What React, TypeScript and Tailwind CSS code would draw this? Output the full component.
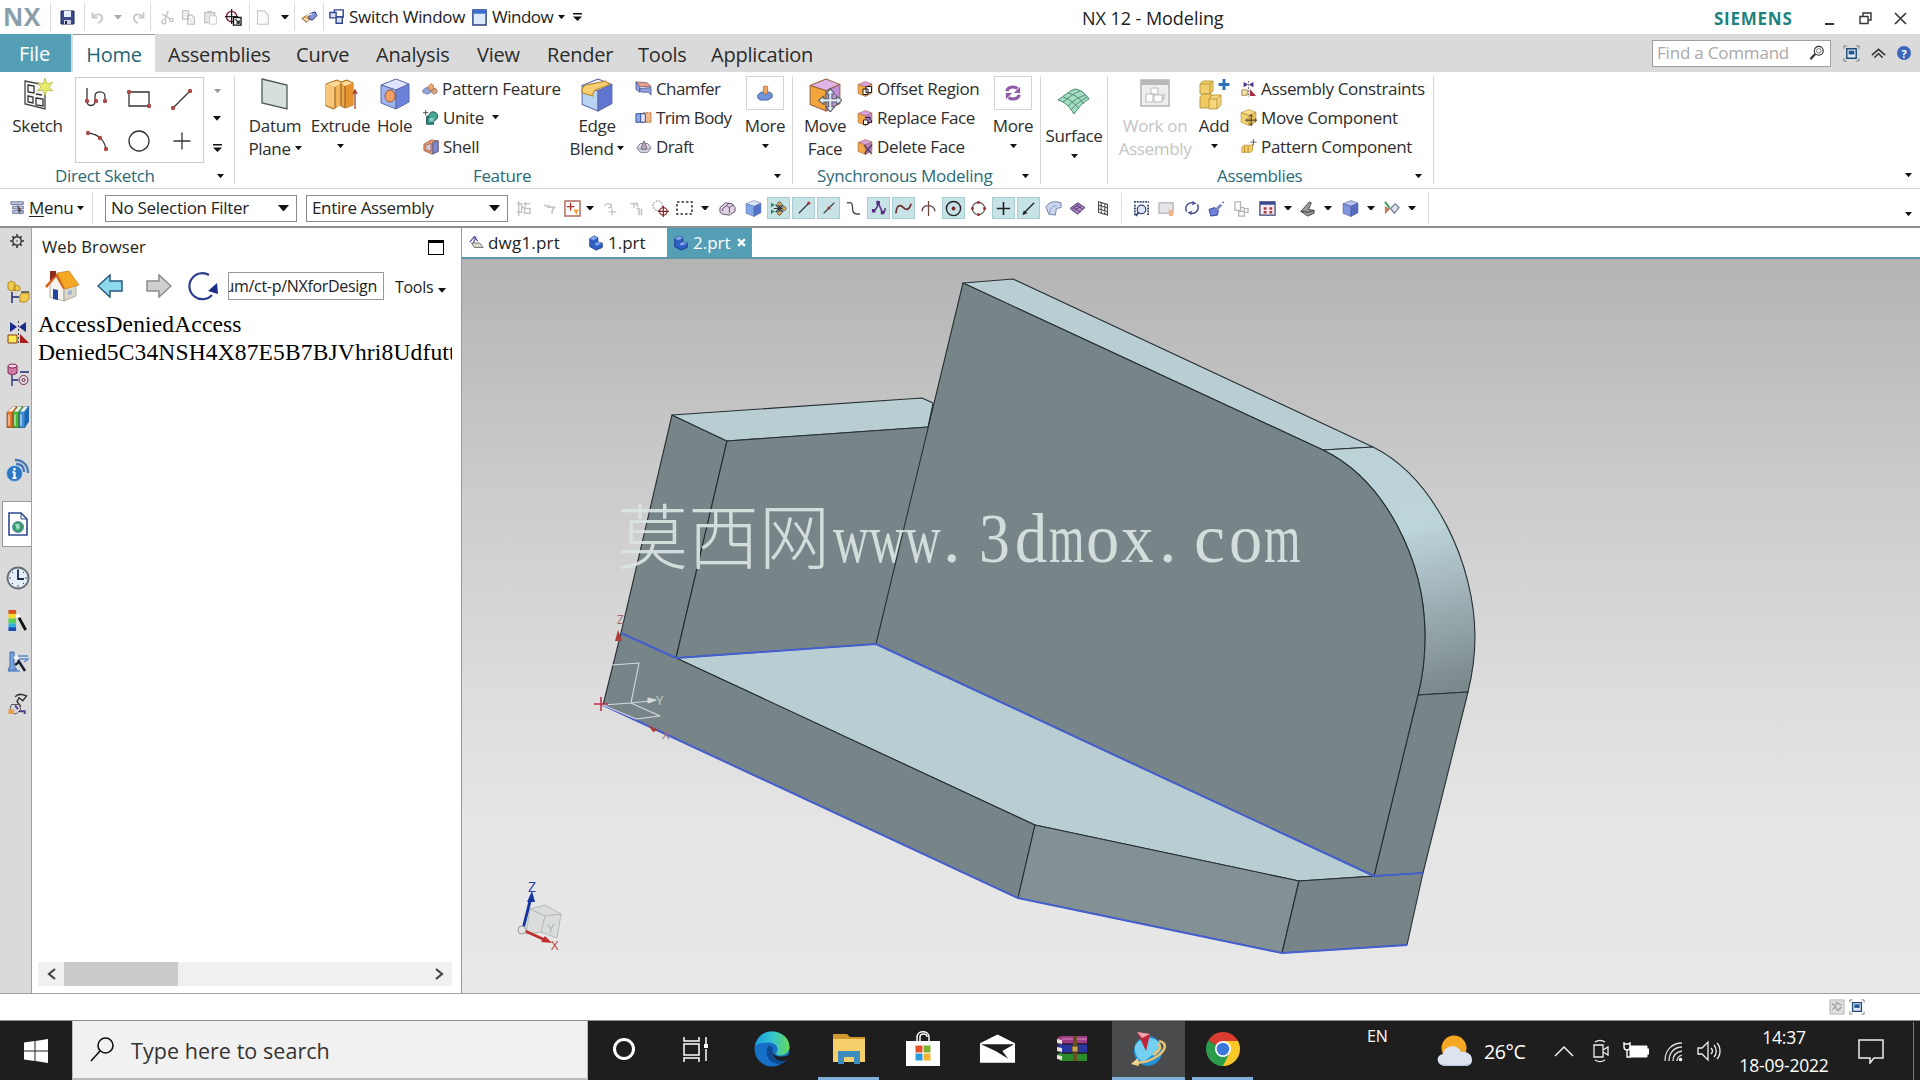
import React from "react";

type IconProps = { w?: number; h?: number; box?: string; children?: React.ReactNode };

function Svg({ w = 18, h, box = "0 0 18 18", children }: IconProps) {
  return (
    <svg width={w} height={h ?? w} viewBox={box} fill="none" className="shrink-0">
      {children}
    </svg>
  );
}

function Arrow({ color = "#111", w = 8 }: { color?: string; w?: number }) {
  return (
    <svg width={w} height={w * 0.6} viewBox="0 0 10 6" className="shrink-0">
      <path d="M0 0h10L5 6z" fill={color} />
    </svg>
  );
}

function ArrowBar() {
  return (
    <Svg w={9} h={8} box="0 0 9 8">
      <path d="M0 0h9v1.4H0zM0 3.4h9L4.500 8z" fill="#111" />
    </Svg>
  );
}

type CubeProps = { top: string; left: string; right: string; line?: string; w?: number; children?: React.ReactNode };

function Cube({ top, left, right, line = "#5a6aa8", w = 18, children }: CubeProps) {
  return (
    <Svg w={w} box="0 0 32 32">
      <g stroke={line} strokeWidth="1" strokeLinejoin="round">
        <path d="M17 1L30 6 17 12 2 7z" fill={top} />
        <path d="M2 7l15 5v19L2 25z" fill={left} />
        <path d="M17 12l13-6v18L17 31z" fill={right} />
      </g>
      {children}
    </Svg>
  );
}

/* ---------- title bar ---------- */

const Sep = ({ className = "h-7" }: { className?: string }) => (
  <div className={`w-px shrink-0 bg-[#dcdcdc] ${className}`} />
);

function TitleBar() {
  return (
    <header className="flex h-[34px] shrink-0 items-center bg-white text-[17px]">
      <div className="w-[50px] pl-[3px] text-[25px] font-bold tracking-[0.5px] text-[#8b9fab]">NX</div>
      <Sep />
      <div className="flex w-[33px] justify-center">
        <Svg w={15} box="0 0 15 15">
          <path d="M1 1h13v13H1z" fill="#3c4a8e" stroke="#1d2550" />
          <path d="M4 1h7v6H4z" fill="#e8eefa" />
          <path d="M4 10h7v4H4z" fill="#cfd4e4" />
          <path d="M5 11h2v3H5z" fill="#1d2550" />
        </Svg>
      </div>
      <Sep />
      <div className="flex w-[65px] items-center justify-around">
        <Svg w={15}>
          <path d="M3 3v6h6M3.500 8.500c4-5 11-4 11 1 0 3-2 5-5 6" stroke="#c8c8c8" strokeWidth="2.200" />
        </Svg>
        <Arrow color="#aaa" />
        <Svg w={15}>
          <path d="M15 3v6H9M14.500 8.500c-4-5-11-4-11 1 0 3 2 5 5 6" stroke="#c8c8c8" strokeWidth="2.200" />
        </Svg>
      </div>
      <Sep />
      <div className="flex w-[98px] items-center justify-around px-1">
        <Svg w={15}>
          <path d="M11 1L7 12M4 5l10 6" stroke="#c4c4c4" strokeWidth="1.800" />
          <circle cx="6" cy="14" r="2.500" stroke="#c4c4c4" strokeWidth="1.600" />
          <circle cx="15" cy="12" r="2" stroke="#c4c4c4" strokeWidth="1.600" />
        </Svg>
        <Svg w={15}>
          <path d="M2 1h7v10H2zM8 6h5l3 3v8H8z" fill="#fff" stroke="#c0c0c0" strokeWidth="1.500" />
          <path d="M4 4h3M4 7h3M10 11h4M10 14h4" stroke="#c8c8c8" />
        </Svg>
        <Svg w={15}>
          <path d="M2 3h12v12H2z" fill="#e8e8e8" stroke="#c4c4c4" strokeWidth="1.500" />
          <path d="M5 1h6v3H5z" fill="#c4c4c4" />
          <path d="M8 7h8v10H8z" fill="#fff" stroke="#c4c4c4" />
        </Svg>
        <Svg w={17}>
          <circle cx="7" cy="8" r="5.500" stroke="#7c2230" strokeWidth="1.500" />
          <path d="M7 0v16M0 8h14" stroke="#222" strokeWidth="1.400" />
          <path d="M9 9h8v8H9z" fill="#fff" stroke="#111" strokeWidth="1.400" />
          <path d="M11 11l4 4M15 12v3h-3" stroke="#111" strokeWidth="1.300" />
        </Svg>
      </div>
      <Sep />
      <div className="flex w-[44px] items-center justify-around">
        <Svg w={15}>
          <path d="M3 1h8l5 5v11H3z" fill="#fafafa" stroke="#c4c4c4" strokeWidth="1.300" />
        </Svg>
        <Arrow />
      </div>
      <Sep />
      <div className="flex w-[28px] justify-center">
        <Svg w={17}>
          <path d="M1 10l6-4 5 3-6 5z" fill="#f0b060" stroke="#8d5a22" />
          <path d="M9 5l6-2 2 4-5 5-4-2z" fill="#8094d6" stroke="#2c3c7c" />
          <path d="M6 7l6-2M3 10l5 3" stroke="#fff" strokeWidth="1.300" />
        </Svg>
      </div>
      <Sep />
      <div className="flex items-center pl-[5px]">
        <Svg w={16}>
          <path d="M6 1h10v8H6z" fill="#fff" stroke="#33468f" strokeWidth="1.600" />
          <path d="M1 4h7v6H1zM8 9h7v7H8z" fill="#dbe5fa" stroke="#33468f" strokeWidth="1.600" />
        </Svg>
        <span className="mb-[1px] ml-[4px] w-[122px] tracking-[-0.3px]">Switch Window</span>
        <Svg w={17}>
          <path d="M2 1h14v16H2z" fill="#dce9fa" stroke="#27407f" strokeWidth="1.500" />
          <path d="M2 1h14v4H2z" fill="#3b6fd0" />
        </Svg>
        <span className="mb-[1px] ml-[4px] w-[66px] tracking-[-0.5px]">Window</span>
        <Arrow w={7} />
        <span className="ml-[8px]">
          <ArrowBar />
        </span>
      </div>
      <div className="ml-[500px] w-[632px] pt-[2px] text-[18px] tracking-[-0.05px]">NX 12 - Modeling</div>
      <div className="w-[111px] pt-[4px] text-[17px] font-bold tracking-[0.75px] text-[#1e8280]">SIEMENS</div>
      <div className="flex items-center pt-[3px]">
        <div className="mt-2.5 h-[2px] w-[9px] bg-[#333]" />
        <div className="ml-[25px]">
          <Svg w={13} box="0 0 13 13">
            <path d="M4 4V1h8v7H9M1 4.500h8v7H1z" stroke="#333" strokeWidth="1.400" />
          </Svg>
        </div>
        <div className="ml-[22px]">
          <Svg w={13} box="0 0 13 13">
            <path d="M1 1l11 11M12 1L1 12" stroke="#333" strokeWidth="1.600" />
          </Svg>
        </div>
      </div>
    </header>
  );
}

/* ---------- ribbon tabs ---------- */

const tabs = [
  { name: "Assemblies", cls: "w-[128px]" },
  { name: "Curve", cls: "w-[80px]" },
  { name: "Analysis", cls: "w-[101px]" },
  { name: "View", cls: "w-[70px]" },
  { name: "Render", cls: "w-[91px]" },
  { name: "Tools", cls: "w-[73px]" },
  { name: "Application", cls: "w-[120px]" },
];

function FullScreenIcon({ w = 17 }: { w?: number }) {
  return (
    <Svg w={w}>
      <path d="M1 4V1h3M14 1h3v3M17 14v3h-3M4 17H1v-3" stroke="#777" />
      <path d="M4 4h10v10H4z" fill="#dfe9f5" stroke="#1f4a7a" strokeWidth="1.500" />
      <path d="M6 6h6v4H6z" fill="#1f5590" />
    </Svg>
  );
}

function RibbonTabs() {
  return (
    <nav className="flex h-[38px] shrink-0 items-stretch bg-[#dadada] text-[20px] leading-[41px] tracking-[-0.2px] text-[#2b2b2b]">
      <div className="w-[71px] bg-[#559fb6] pr-[2px] text-center leading-[39px] text-white">File</div>
      <div className="ml-[2px] mr-[13px] w-[82px] border-t border-[#999] bg-white text-center leading-[39px] text-[#1d6674]">
        Home
      </div>
      {tabs.map((t) => (
        <div key={t.name} className={t.cls}>
          {t.name}
        </div>
      ))}
      <div className="ml-auto mr-[9px] flex items-center">
        <div className="mr-[12px] flex h-[27px] w-[179px] items-center justify-between border border-[#a0a0a0] bg-white pb-[1px] pl-[4px] pr-[5px] text-[17px] leading-none tracking-[-0.2px] text-[#aaa]">
          Find a Command
          <Svg w={16}>
            <circle cx="11" cy="6.500" r="5" stroke="#333" strokeWidth="1.300" />
            <circle cx="11" cy="6.500" r="2.500" stroke="#666" />
            <path d="M7 10l-5.500 6" stroke="#333" strokeWidth="2.500" />
          </Svg>
        </div>
        <FullScreenIcon w={17} />
        <span className="mx-[11px]">
          <Svg w={15}>
            <path d="M1 11l8-7 8 7M4 14l5-5 5 5" stroke="#333" strokeWidth="1.800" />
          </Svg>
        </span>
        <div className="flex h-[14px] w-[14px] items-center justify-center rounded-full bg-[#3a67bb] text-[11px] font-bold leading-none text-white">
          ?
        </div>
      </div>
    </nav>
  );
}

/* ---------- ribbon icons ---------- */

const SketchIcon = () => (
  <Svg w={32} box="0 0 32 32">
    <path d="M3 3l20 4v24L3 26z" fill="#f6f6f6" stroke="#444" strokeWidth="1.300" />
    <path d="M6 7l6 1v7l-6-1zM6 18l5 1v6l-5-1zM14 20l7 1v7l-7-1zM14 16l6 1" stroke="#333" strokeWidth="1.300" />
    <path d="M23 0l2 6 6-2-4 5 4 4-6-1-2 6-2-6-6 1 4-4-4-5 6 2z" fill="#e9ec6b" stroke="#a5a83c" strokeWidth=".6" />
  </Svg>
);

const DatumIcon = () => (
  <Svg w={32} box="0 0 32 32">
    <path d="M3 1l25 6v24L3 25z" fill="#d5dfdb" stroke="#4f5b57" strokeWidth="1.300" />
  </Svg>
);

const ExtrudeIcon = () => (
  <Svg w={34} box="0 0 34 32">
    <path d="M2 5l11-4 4 2 6-2 6 3v22l-8 3-6-3-5 4-8-3z" fill="#eda545" stroke="#a8691c" />
    <path d="M2 5l9 3v21l-9-3z" fill="#f8c777" />
    <path d="M11 8l6-4v22l-6 3z" fill="#f2b257" />
    <path d="M21 7l8-3v22l-8 3z" fill="#e2922f" />
    <path d="M3 5l10-3 4 2-6 4zM17 4l6-2 5 2-7 3z" fill="#fbdca0" />
    <path d="M11 8v21M17 4v22M21 7v21" stroke="#8e5a1a" />
    <path d="M31 30V12M29 15l2-4 2 4" stroke="#9b4030" strokeWidth="1.300" />
  </Svg>
);

const SurfaceIcon = () => (
  <Svg w={34} h={28} box="0 0 34 28">
    <path d="M1 12C7 8 12 3 18 1c6 1 10 4 14 10-6 3-11 9-15 15C12 18 8 14 1 12z" fill="#a6dcc0" stroke="#3e8a6a" />
    <path d="M6 9c7 2 12 7 16 12M11 5c8 2 12 6 16 11M6 14C11 10 17 5 23 3M11 18c5-5 11-9 17-11M14 22c4-5 9-9 16-13" stroke="#4f8f78" />
  </Svg>
);

const WorkIcon = () => (
  <Svg w={30} box="0 0 30 30">
    <path d="M1 2h28v26H1z" fill="#eee" stroke="#b4b4b4" strokeWidth="1.500" />
    <path d="M1 2h28v5H1z" fill="#b8b8b8" />
    <path d="M6 16h7v8H6zM14 17h8v7h-8zM11 10h7v6h-7z" fill="#fff" stroke="#bbb" />
    <path d="M22 17l3-2v6l-3 3z" fill="#ccc" />
  </Svg>
);

const AddIcon = () => (
  <Svg w={32} box="0 0 32 32">
    <g stroke="#b08a30" strokeWidth=".8">
      <path d="M2 6l3-3h10v10l-3 3H2z" fill="#f0cf6c" />
      <path d="M2 19l3-3h8v11l-3 3H2z" fill="#efcb62" />
      <path d="M11 21l3-4h9v10l-4 4h-8z" fill="#f4d67c" />
      <path d="M2 6h10v10M12 6l3-3M11 21h8v10M19 21l4-4" />
    </g>
    <path d="M26 1v11M20.500 6.500h11" stroke="#2d70b8" strokeWidth="3" />
  </Svg>
);

const MoveFaceIcon = () => (
  <Cube w={34} top="#e0b4e8" left="#f3a53a" right="#c08fd6" line="#9a6340">
    <path d="M21 13v16M13 21h16" stroke="#50606c" strokeWidth="4" />
    <path d="M21 10l-4 5h8zM21 32l-4-5h8zM10 21l5-4v8zM32 21l-5-4v8z" fill="#dfe9ee" stroke="#50606c" />
    <path d="M21 13v16M13 21h16" stroke="#dfe9ee" strokeWidth="2" />
  </Cube>
);

const smallIcons: Record<string, React.ReactNode> = {
  "Pattern Feature": (
    <Svg w={16}>
      <path d="M1 10l4-3 5 2v4l-4 2-5-2z" fill="#8fa6dc" stroke="#5a648c" strokeWidth=".7" />
      <path d="M7 6l3-3 3 2v4l-3 2-3-2z" fill="#eba871" stroke="#9a5b2b" strokeWidth=".7" />
      <path d="M11 10l4-2 2 2v3l-4 2-2-2z" fill="#d9a27c" stroke="#7c5a4c" strokeWidth=".7" />
    </Svg>
  ),
  Unite: (
    <Svg w={16}>
      <path d="M4 7h8v9H4z" fill="#2f8f83" stroke="#174f49" />
      <circle cx="11.500" cy="7" r="5" fill="#4aa897" stroke="#174f49" />
      <path d="M7 9h5v4H7z" fill="#8cd0c4" />
      <path d="M0 3h6M3 0v6" stroke="#444" />
    </Svg>
  ),
  Shell: (
    <Svg w={16}>
      <path d="M1 6l8-5 8 1v12l-7 3-9-4z" fill="#e79a6c" stroke="#8a4c34" strokeWidth=".8" />
      <path d="M11 4l6-2v12l-6 3z" fill="#7c8bd2" stroke="#3f4a88" strokeWidth=".8" />
      <path d="M3 7l6-2v9l-6-2z" fill="#dcc4d4" stroke="#8a4c34" strokeWidth=".7" />
    </Svg>
  ),
  Chamfer: (
    <Svg w={17}>
      <path d="M1 2l12 1 4 4-12 0z" fill="#eba58f" stroke="#7c4a52" strokeWidth=".8" />
      <path d="M1 2l4 5v6l-4-3zM5 9l12-1v8l-3-3-6 0-3-1z" fill="#8fa1dc" stroke="#4a5590" strokeWidth=".8" />
    </Svg>
  ),
  "Trim Body": (
    <Svg w={17}>
      <path d="M1 5h8v9H1z" fill="#8ba7e4" stroke="#324b94" />
      <path d="M9 4h8v10H9z" fill="#f2b98a" stroke="#a3602c" strokeDasharray="2 1" />
      <path d="M6 5h5v9H6z" fill="#dfe6f8" stroke="#324b94" />
    </Svg>
  ),
  Draft: (
    <Svg w={16}>
      <path d="M1 10l4-5h8l4 5-4 5H5z" fill="#dcdfea" stroke="#6b7088" />
      <path d="M6 9l3-7 3 7v3H6z" fill="#b9a4b4" stroke="#6d5468" strokeWidth=".8" />
      <path d="M2 11h14" stroke="#8a8fa8" />
    </Svg>
  ),
  "Offset Region": (
    <Cube w={16} top="#d7a0dc" left="#f2a94c" right="#e9975a" line="#9a5b30">
      <path d="M12 16h10v11H12zM18 11h11v12H18z" fill="#fff" stroke="#222" strokeWidth="2" />
    </Cube>
  ),
  "Replace Face": (
    <Cube w={16} top="#d7a0dc" left="#f2a94c" right="#b983cf" line="#9a5b30">
      <path d="M13 20h9v9h-9z" fill="#fff" stroke="#222" strokeWidth="2" />
      <path d="M16 15h10v5M20 25h9v-5" stroke="#222" strokeWidth="2" />
    </Cube>
  ),
  "Delete Face": (
    <Cube w={16} top="#d7a0dc" left="#f2a94c" right="#b983cf" line="#9a5b30">
      <path d="M14 12l16 18M30 11L15 30" stroke="#5a3a4c" strokeWidth="2.500" />
    </Cube>
  ),
  "Assembly Constraints": (
    <Svg w={16}>
      <path d="M3 1l5 3-5 3zM14 1L9 4l5 3z" fill="#4c2d8c" />
      <path d="M1 10h6v6H1z" fill="#f4e4b4" stroke="#a3803a" />
      <path d="M10 9l7 8h-7z" fill="#a33040" />
      <path d="M8.500 0v18" stroke="#555" strokeDasharray="2 1.500" />
    </Svg>
  ),
  "Move Component": (
    <Cube w={17} top="#f6de8e" left="#f3d26e" right="#e8c25a" line="#a87f2c">
      <path d="M21 11v20M11 21h20M18 14l3-3 3 3M18 28l3 3 3-3M14 18l-3 3 3 3M28 18l3 3-3 3" stroke="#222" strokeWidth="1.600" />
    </Cube>
  ),
  "Pattern Component": (
    <Svg w={16}>
      <path d="M1 9l2-2h8l2-1v7l-2 2H1z" fill="#f2cf6a" stroke="#b08430" strokeWidth=".8" />
      <path d="M4 8v7M8 8v7" stroke="#b08430" />
      <path d="M14 0v7M10.500 3.500h7" stroke="#555" />
    </Svg>
  ),
};

/* ---------- ribbon ---------- */

type BigProps = { cls: string; icon: React.ReactNode; lines: string[]; arrow?: "inline" | "below"; disabled?: boolean };

function BigButton({ cls, icon, lines, arrow, disabled }: BigProps) {
  return (
    <div
      className={`flex shrink-0 flex-col items-center text-center leading-[23px] ${cls} ${disabled ? "text-[#c4c4c4]" : ""}`}
    >
      <div className="flex h-[38px] items-start justify-center pt-[2px]">{icon}</div>
      {lines.map((l, i) => (
        <div key={l} className="flex items-center gap-[4px]">
          {l}
          {arrow === "inline" && i === lines.length - 1 && <Arrow w={7} />}
        </div>
      ))}
      {arrow === "below" && (
        <div className="mt-[7px] flex">
          <Arrow w={7} />
        </div>
      )}
    </div>
  );
}

function SmallList({ cls, names }: { cls: string; names: string[] }) {
  return (
    <div className={`-mt-[2px] flex shrink-0 flex-col ${cls}`}>
      {names.map((n) => (
        <div key={n} className="flex h-[29px] shrink-0 items-center gap-[4px]">
          <span className="flex w-[17px] justify-center">{smallIcons[n]}</span>
          {n}
          {n === "Unite" && (
            <span className="ml-[4px]">
              <Arrow w={7} />
            </span>
          )}
        </div>
      ))}
    </div>
  );
}

type GroupProps = { cls: string; label?: string; labelCls?: string; arrowCls?: string; children: React.ReactNode };

function Group({ cls, label, labelCls = "", arrowCls = "mr-[11px]", children }: GroupProps) {
  return (
    <section className={`flex h-[108px] shrink-0 flex-col border-r border-[#d6d6d6] ${cls}`}>
      <div className="flex h-[86px] shrink-0">{children}</div>
      {label && (
        <div className="mt-[4px] flex h-[20px] items-center justify-between text-[#2a6a78]">
          <span className={labelCls}>{label}</span>
          <span className={arrowCls}>
            <Arrow w={7} />
          </span>
        </div>
      )}
    </section>
  );
}

const MoreBox = ({ children }: { children: React.ReactNode }) => (
  <div className="-mt-[2px] flex h-[34px] w-[38px] items-center justify-center border border-[#d4d4de] bg-white">
    {children}
  </div>
);

function SketchGallery() {
  const dot = (x: number, y: number) => <circle key={`${x}-${y}`} cx={x} cy={y} r="2.200" fill="#a94a4a" />;
  return (
    <div className="mt-[1px] grid h-[86px] w-[129px] grid-cols-3 grid-rows-2 place-items-center border border-[#ccc]">
      <Svg w={24} box="0 0 24 24">
        <path d="M2 1v13c0 6 8 6 8 0V9c0-6 10-5 10 0v7" stroke="#333" strokeWidth="1.300" />
        {dot(2, 14)}
        {dot(11, 14)}
        {dot(20, 14)}
      </Svg>
      <Svg w={24} box="0 0 24 24">
        <path d="M2 5h20v14H2z" stroke="#333" strokeWidth="1.300" />
        {dot(2, 5)}
        {dot(22, 19)}
      </Svg>
      <Svg w={24} box="0 0 24 24">
        <path d="M3 21L20 4" stroke="#333" strokeWidth="1.300" />
        {dot(3, 21)}
        {dot(20, 4)}
      </Svg>
      <Svg w={24} box="0 0 24 24">
        <path d="M3 4c10 1 17 7 18 17" stroke="#333" strokeWidth="1.300" />
        {dot(3, 4)}
        {dot(15, 9)}
        {dot(21, 20)}
      </Svg>
      <Svg w={24} box="0 0 24 24">
        <circle cx="12" cy="12" r="10" stroke="#333" strokeWidth="1.300" />
      </Svg>
      <Svg w={24} box="0 0 24 24">
        <path d="M12 3.500v17M3.500 12h17" stroke="#333" strokeWidth="1.300" />
      </Svg>
    </div>
  );
}

function Ribbon() {
  return (
    <div className="flex h-[117px] shrink-0 border-b border-[#d0d0d0] bg-white pt-[4px] text-[17px] tracking-[-0.35px] text-[#2d2d2d]">
      <Group cls="w-[235px]" label="Direct Sketch" labelCls="ml-[55px]" arrowCls="mr-[10px]">
        <BigButton cls="w-[75px]" icon={<SketchIcon />} lines={["Sketch"]} />
        <SketchGallery />
        <div className="flex w-[26px] flex-col items-center justify-between pb-[10px] pt-[13px]">
          <Arrow color="#999" w={7} />
          <Arrow />
          <ArrowBar />
        </div>
      </Group>
      <Group cls="w-[558px]" label="Feature" labelCls="ml-[238px]">
        <BigButton cls="ml-[4px] w-[72px]" icon={<DatumIcon />} lines={["Datum", "Plane"]} arrow="inline" />
        <BigButton cls="w-[59px]" icon={<ExtrudeIcon />} lines={["Extrude"]} arrow="below" />
        <BigButton
          cls="w-[49px]"
          icon={
            <Cube w={32} top="#dfe6fb" left="#9db4f0" right="#6c82d8">
              <ellipse cx="11" cy="18" rx="5" ry="6" fill="#f3a064" stroke="#a0522d" />
            </Cube>
          }
          lines={["Hole"]}
        />
        <SmallList cls="ml-[3px] w-[137px]" names={["Pattern Feature", "Unite", "Shell"]} />
        <BigButton
          cls="w-[76px]"
          icon={
            <Cube w={34} top="#eaf1fc" left="#b9d3f4" right="#5f75d0">
              <path d="M2 12c0-4 3-6 7-6l15-3 4 3-13 5c-2 1-3 3-3 6L2 14z" fill="#f5cf72" stroke="#b98a2e" />
            </Cube>
          }
          lines={["Edge", "Blend"]}
          arrow="inline"
        />
        <SmallList cls="w-[108px] tracking-[-0.6px]" names={["Chamfer", "Trim Body", "Draft"]} />
        <BigButton
          cls="w-[44px]"
          icon={
            <MoreBox>
              <Svg w={16}>
                <path d="M1 11l4-3h9l3 2v4l-5 3H4l-3-2z" fill="#6f94d8" stroke="#3c5a9c" />
                <path d="M7 2l3-1 2 1v8H7z" fill="#eba46a" stroke="#a5642f" strokeWidth=".8" />
              </Svg>
            </MoreBox>
          }
          lines={["More"]}
          arrow="below"
        />
      </Group>
      <Group cls="w-[248px]" label="Synchronous Modeling" labelCls="ml-[24px] tracking-[-0.3px]">
        <BigButton cls="ml-[1px] w-[62px]" icon={<MoveFaceIcon />} lines={["Move", "Face"]} />
        <SmallList cls="w-[135px]" names={["Offset Region", "Replace Face", "Delete Face"]} />
        <BigButton
          cls="w-[44px]"
          icon={
            <MoreBox>
              <Svg w={16}>
                <path d="M2 7c1-5 8-6 12-3M16 11c-1 5-8 6-12 3" stroke="#8d5ba8" strokeWidth="3.500" />
                <path d="M17 2v7h-7zM1 16V9h7z" fill="#8d5ba8" />
              </Svg>
            </MoreBox>
          }
          lines={["More"]}
          arrow="below"
        />
      </Group>
      <Group cls="w-[67px]">
        <BigButton cls="mt-[10px] w-[66px]" icon={<SurfaceIcon />} lines={["Surface"]} arrow="below" />
      </Group>
      <Group cls="w-[326px]" label="Assemblies" labelCls="ml-[109px]">
        <BigButton cls="ml-[12px] w-[70px]" icon={<WorkIcon />} lines={["Work on", "Assembly"]} disabled />
        <BigButton cls="w-[48px]" icon={<AddIcon />} lines={["Add"]} arrow="below" />
        <SmallList cls="ml-[2px] w-[190px]" names={["Assembly Constraints", "Move Component", "Pattern Component"]} />
      </Group>
      <div className="ml-auto mr-[8px] mt-[97px]">
        <Arrow w={7} />
      </div>
    </div>
  );
}

/* ---------- selection bar ---------- */

const faded = "#c3c3c3";

type Tool = { cls: string; on?: boolean; icon: React.ReactNode };

const bar = (d: React.ReactNode, w = 17) => <Svg w={w}>{d}</Svg>;
const blueCube = <Cube w={17} top="#dbe8fb" left="#7fa6e6" right="#4f74c9" />;
const drop = (cls: string): Tool => ({ cls, icon: <Arrow w={8} /> });

const tools: Tool[] = [
  { cls: "w-[25px]", icon: bar(<path d="M2 4h5v9H2M7 8h4M11 2v5M9 4h7M10 9h6v5h-6zM4 1v16" stroke={faded} strokeWidth="1.500" />) },
  { cls: "w-[25px]", icon: bar(<path d="M3 5l5 3 2-3M9 8h7l-3 4v4" stroke={faded} strokeWidth="2" />, 14) },
  {
    cls: "w-[22px]",
    icon: bar(
      <>
        <path d="M1 1h16v16H1z" fill="#fff" stroke="#b06a5c" strokeWidth="1.500" />
        <path d="M7 3v8M3 7h8" stroke="#a33" strokeWidth="1.500" />
        <path d="M10 10h6l-2 3v3l-2-2z" fill="#e9a53c" />
      </>
    ),
  },
  drop("w-[13px]"),
  { cls: "w-[28px]", icon: bar(<path d="M2 6c2-4 7-4 8 1M10 3v5H6M11 9v8M7 13h9" stroke={faded} strokeWidth="1.500" />, 15) },
  { cls: "w-[24px]", icon: bar(<path d="M2 3h8v4M6 3v5M9 9h3v8M15 9v8" stroke={faded} strokeWidth="2" />, 15) },
  {
    cls: "w-[24px]",
    icon: bar(
      <>
        <circle cx="6" cy="6" r="5" stroke="#555" strokeDasharray="1.500 1.500" />
        <circle cx="12" cy="12" r="4" stroke="#9a3a3a" strokeWidth="1.300" />
        <path d="M12 6v12M6 12h12" stroke="#7a2c2c" strokeWidth="1.300" />
      </>
    ),
  },
  { cls: "w-[25px]", icon: bar(<path d="M1 3h15v12H1z" stroke="#333" strokeWidth="1.500" strokeDasharray="2.500 2" />, 18) },
  drop("w-[16px]"),
  {
    cls: "w-[28px]",
    icon: bar(
      <>
        <path d="M1 8l6-5 7 1 3 4v4l-6 4-7-1-3-2z" fill="#e0d4e2" stroke="#5d4a68" />
        <path d="M4 12V9l4-3 3 2v6M11 8l4-3M8 6l3-3" stroke="#5d4a68" />
      </>
    ),
  },
  { cls: "w-[25px]", icon: blueCube },
  {
    cls: "w-[25px]",
    on: true,
    icon: bar(
      <>
        <path d="M1 3l4 2-4 3zM1 10l4 2-4 3z" fill="#2a8a5a" />
        <path d="M10 2v14M4 9h13M6 5l8 8M14 5l-8 8" stroke="#333" strokeWidth="1.300" />
        <circle cx="10" cy="4" r="2" fill="#e8b83c" stroke="#444" strokeWidth=".8" />
        <circle cx="10" cy="14" r="2" fill="#e8b83c" stroke="#444" strokeWidth=".8" />
        <circle cx="15" cy="9" r="2" fill="#e8b83c" stroke="#444" strokeWidth=".8" />
      </>
    ),
  },
  { cls: "w-[25px]", on: true, icon: bar(<><path d="M3 15L14 4" stroke="#333" strokeWidth="1.400" /><circle cx="14.500" cy="3.500" r="1.800" fill="#a33" /></>, 16) },
  { cls: "w-[25px]", on: true, icon: bar(<><path d="M3 15L15 3" stroke="#333" strokeWidth="1.400" /><circle cx="9" cy="9" r="1.800" fill="#a33" /></>, 16) },
  { cls: "w-[25px]", icon: bar(<path d="M2 3c6-1 6 1 6 6s2 6 8 6" stroke="#444" strokeWidth="1.400" />) },
  { cls: "w-[25px]", on: true, icon: bar(<><path d="M2 12c3 0 5-2 6-9l4 9c2 3 4 2 4-3" stroke="#5a2d84" strokeWidth="1.700" /><path d="M1 10h4v4H1zM6 1h4v4H6zM11 12h4v4h-4z" fill="#5a2d84" /></>, 16) },
  { cls: "w-[25px]", on: true, icon: bar(<path d="M1 14C2 4 6 5 9 8s6 3 8-4" stroke="#6e3030" strokeWidth="1.900" />) },
  { cls: "w-[25px]", icon: bar(<path d="M9 1v16M2 12C3 6 6 6 9 6s6 1 7 6" stroke="#6a4040" strokeWidth="1.300" />) },
  { cls: "w-[25px]", on: true, icon: bar(<><circle cx="9" cy="9" r="7.500" stroke="#222" strokeWidth="1.500" /><circle cx="9" cy="9" r="2" fill="#7a2c2c" /></>) },
  { cls: "w-[25px]", icon: bar(<><circle cx="9" cy="9" r="6.500" stroke="#555" strokeWidth="1.300" /><path d="M9 1v3M9 14v3M1 9h3M14 9h3" stroke="#a33" strokeWidth="2.500" /></>) },
  { cls: "w-[25px]", on: true, icon: bar(<path d="M9 2v14M2 9h14" stroke="#222" strokeWidth="1.700" />) },
  { cls: "w-[25px]", on: true, icon: bar(<><path d="M3 15L15 3" stroke="#222" strokeWidth="1.400" /><path d="M4 11l4 3-5 2z" fill="#222" /></>) },
  { cls: "w-[24px]", icon: bar(<><path d="M1 7c4-6 10-6 16-4v5l-5 1-1 7-7-1z" fill="#c9d6ee" stroke="#6d7fa8" /><path d="M5 15c0-6 2-8 7-9" stroke="#8d9cc0" /></>) },
  { cls: "w-[25px]", icon: bar(<><path d="M1 9l8-6 8 5-8 7z" fill="#b38ac4" stroke="#553a78" /><path d="M4 7l8 6M7 5l8 5M5 12l8-6M3 10l8-6" stroke="#553a78" /></>) },
  { cls: "w-[25px]", icon: bar(<path d="M4 2l10 3v12L4 14zM4 6l10 3M4 10l10 3M7 3v12M11 4v12" stroke="#444" strokeWidth="1.200" />, 16) },
  { cls: "w-[13px]", icon: <Sep className="h-[32px]" /> },
  { cls: "w-[26px]", icon: bar(<><path d="M1 2h16M2 5v12M16 5v12" stroke="#33446e" strokeWidth="2" strokeDasharray="2 1" /><circle cx="9" cy="10" r="4.500" fill="#dce8fa" stroke="#33446e" strokeWidth="1.300" /><path d="M6 13l-3 4" stroke="#33446e" strokeWidth="2" /></>) },
  { cls: "w-[25px]", icon: bar(<><path d="M1 3h15v11H1z" fill="#e6e6ea" stroke="#9a9aa4" /><path d="M11 10l5 1v6h-4z" fill="#f0b48a" /></>) },
  { cls: "w-[25px]", icon: bar(<><path d="M3 13C0 7 5 2 11 3M15 5c3 6-2 11-8 10" stroke="#4a5498" strokeWidth="1.700" /><path d="M10 1l4 3-5 2zM8 17l-4-3 5-2z" fill="#4a5498" /></>, 16) },
  { cls: "w-[24px]", icon: bar(<><path d="M1 10l6-2 4 3-1 5-7 1z" fill="#6d83d8" stroke="#33408c" /><path d="M9 10l5-5" stroke="#7c88bc" strokeWidth="3" /><circle cx="16" cy="2.500" r="1" fill="#55609c" /></>) },
  { cls: "w-[26px]", icon: bar(<path d="M2 2h6v9H2zM8 8h4M6 12h6v5H6zM12 9h4v4h-4z" fill="#fafafa" stroke="#b4b4b4" strokeWidth="1.300" />) },
  { cls: "w-[26px]", icon: bar(<><path d="M1 2h16v14H1z" fill="#f4ecf0" stroke="#3a4070" strokeWidth="1.300" /><path d="M1 2h16v3H1z" fill="#3a4a90" /><path d="M5 9h3M11 9h3M5 13h3M11 13h3" stroke="#b03a4a" strokeWidth="2.500" /></>) },
  drop("w-[15px]"),
  { cls: "w-[25px]", icon: bar(<><path d="M2 12l9-10 2 1-3 7 6 1v3l-7 3z" fill="#9a9a9a" stroke="#444" /><path d="M2 12l8 1 6-2" stroke="#333" /></>) },
  drop("w-[16px]"),
  { cls: "w-[28px]", icon: <Cube w={17} top="#b9c6f0" left="#7f95e0" right="#5a6cc0" line="#3c4a90" /> },
  drop("w-[14px]"),
  { cls: "w-[27px]", icon: bar(<><path d="M2 7l6 2-6 6z" fill="#c07a5c" /><path d="M2 2l5 6" stroke="#3a9a5a" strokeWidth="2" /><path d="M8 9l5-5 4 4-5 6z" fill="#dfe3ee" stroke="#777e98" strokeWidth="1.300" /></>) },
  drop("w-[14px]"),
  { cls: "ml-[8px] w-[2px]", icon: <Sep className="h-[32px]" /> },
];

function Combo({ cls, text }: { cls: string; text: string }) {
  return (
    <div className={`flex h-[27px] items-center justify-between border border-[#8a8a8a] bg-white pl-[5px] pr-[7px] ${cls}`}>
      {text}
      <Arrow w={11} />
    </div>
  );
}

function SelectionBar() {
  return (
    <div className="flex h-[39px] shrink-0 items-center border-b-2 border-[#8c9092] bg-white pt-[1px] text-[17px] tracking-[-0.35px]">
      <div className="flex w-[92px] items-center pl-[10px]">
        <Svg w={16}>
          <path d="M1 2h14v3H1zM3 7h12v3H3zM3 12h12v3H3z" fill="#c6cde8" stroke="#55608c" strokeWidth=".9" />
          <path d="M8 5l6 8-3 0 1 4-3-4z" fill="#555" />
        </Svg>
        <span className="ml-[3px] mr-[4px]">
          <u className="underline-offset-2">M</u>enu
        </span>
        <Arrow w={7} />
      </div>
      <Sep className="h-[32px]" />
      <Combo cls="ml-[12px] w-[192px] tracking-[-0.3px]" text="No Selection Filter" />
      <Combo cls="ml-[9px] w-[202px]" text="Entire Assembly" />
      <div className="ml-[3px] flex items-center">
        {tools.map((t, i) => (
          <div key={i} className={`flex shrink-0 justify-center ${t.cls}`}>
            {t.on ? (
              <div className="flex h-[22px] w-[23px] items-center justify-center border border-[#a9cdd4] bg-[#c8e3e8]">{t.icon}</div>
            ) : (
              t.icon
            )}
          </div>
        ))}
      </div>
      <div className="ml-auto mr-[8px] mt-[12px]">
        <Arrow w={7} />
      </div>
    </div>
  );
}

/* ---------- resource bar ---------- */

const rail: { cls: string; icon: React.ReactNode }[] = [
  {
    cls: "h-[26px] pr-[3px]",
    icon: (
      <Svg w={14}>
        <circle cx="9" cy="9" r="5.500" stroke="#333" strokeWidth="1.800" />
        <circle cx="9" cy="9" r="1" fill="#333" />
        <path d="M9 0v3M9 15v3M0 9h3M15 9h3M3 3l2 2M13 13l2 2M15 3l-2 2M5 13l-2 2" stroke="#333" strokeWidth="2" />
      </Svg>
    ),
  },
  {
    cls: "mt-[17px] h-[40px]",
    icon: (
      <Svg w={23} box="0 0 23 23">
        <path d="M1 3l3-2 4 2v7l-3 1-4-2zM7 6l3-1 3 2v3l-3 1-3-1zM13 15l3-2h6v6l-3 3h-6z" fill="#f0cb4c" stroke="#b08a20" />
        <path d="M14 12h8" stroke="#333" strokeWidth="1.300" />
        <path d="M5 12v11M5 17h7" stroke="#1c2a6c" strokeWidth="1.500" />
      </Svg>
    ),
  },
  {
    cls: "h-[42px]",
    icon: (
      <Svg w={23} box="0 0 23 23">
        <path d="M3 1l7 5-7 5zM19 1l-7 5 7 5z" fill="#1c2a8c" />
        <path d="M1 14h9v8H1z" fill="#f6ea4c" stroke="#8a3a1c" />
        <path d="M13 13l9 9h-9z" fill="#a81c1c" />
        <path d="M11.500 0v23" stroke="#444" strokeDasharray="2 2" />
      </Svg>
    ),
  },
  {
    cls: "h-[43px]",
    icon: (
      <Svg w={23} box="0 0 23 23">
        <path d="M1 3h9v7c-2 2-7 2-9 0z" fill="#d07aa8" stroke="#7c2858" />
        <ellipse cx="5.500" cy="3" rx="4.500" ry="2" fill="#f4d4e4" stroke="#7c2858" />
        <path d="M5 12v11M5 17h6M13 9h9" stroke="#1c2a6c" strokeWidth="1.300" />
        <circle cx="16.500" cy="17" r="4.500" stroke="#7c2858" />
        <circle cx="16.500" cy="17" r="1.500" stroke="#7c2858" />
      </Svg>
    ),
  },
  {
    cls: "h-[42px]",
    icon: (
      <Svg w={24} box="0 0 24 23">
        <path d="M1 7l6-6h4L7 7v15H1z" fill="#e8742c" stroke="#7a3c14" strokeWidth=".7" />
        <path d="M7 7l6-6h4l-4 6v15H7z" fill="#4cb83c" stroke="#2c6418" strokeWidth=".7" />
        <path d="M13 7l6-6h4l-4 6v15h-6z" fill="#3c8cd8" stroke="#1c4c84" strokeWidth=".7" />
        <path d="M19 7l4-6v15l-4 6z" fill="#1c64b4" />
        <path d="M2 6l5-5h3L6 6zM8 6l5-5h3l-4 5zM14 6l5-5h3l-4 5z" fill="#f2f4ee" />
        <path d="M3 9v11M9 9v11M15 9v11" stroke="#fff" opacity=".6" strokeWidth="1.500" />
      </Svg>
    ),
  },
  {
    cls: "mt-[11px] h-[42px]",
    icon: (
      <Svg w={24} box="0 0 24 24">
        <path d="M9 2c8 0 13 5 13 13M10 6c5 0 8 3 8 8" stroke="#4a78b4" strokeWidth="2.300" />
        <circle cx="8.500" cy="15.500" r="8" fill="#2c78c4" stroke="#bcd8f0" strokeWidth=".8" />
        <path d="M8.500 10v2.500M8.500 14v6M6.500 14h2M6.500 20h4" stroke="#fff" strokeWidth="2.200" />
      </Svg>
    ),
  },
  {
    cls: "ml-[2px] mt-[10px] h-[46px] border-y border-l border-[#999] bg-white pr-[3px]",
    icon: (
      <Svg w={20} h={24} box="0 0 20 24">
        <path d="M1 1h12l6 6v16H1z" fill="#fff" stroke="#2c4a8c" strokeWidth="1.600" />
        <path d="M13 1v6h6" stroke="#2c4a8c" />
        <circle cx="10" cy="15" r="5.500" fill="#3c9c6c" stroke="#5c8cb4" />
        <path d="M7 12l4 0 1 4-3 2z" fill="#a4dcc4" />
      </Svg>
    ),
  },
  {
    cls: "mt-[9px] h-[44px]",
    icon: (
      <Svg w={24} box="0 0 24 24">
        <circle cx="12" cy="12" r="10.500" fill="#e4eef8" stroke="#666d76" strokeWidth="1.800" />
        <path d="M12 3v2M12 19v2M3 12h2M19 12h2M6 6l1 1M18 18l-1-1M18 6l-1 1M6 18l1-1" stroke="#445" />
        <path d="M12 4v9h6" stroke="#1c2c4c" strokeWidth="1.800" />
      </Svg>
    ),
  },
  {
    cls: "-mt-[1px] h-[42px]",
    icon: (
      <Svg w={22} box="0 0 22 23">
        <path d="M1 1h8v5H1z" fill="#d8501c" />
        <path d="M1 5h8v5H1z" fill="#f0d82c" />
        <path d="M1 10h8v5H1z" fill="#58d058" />
        <path d="M1 15h8v4H1z" fill="#2cb0e0" />
        <path d="M1 19h8v4H1z" fill="#1c4cb4" />
        <path d="M10 6l3 4" stroke="#fff" strokeWidth="4" />
        <path d="M12 9l7 13" stroke="#111" strokeWidth="3" />
      </Svg>
    ),
  },
  {
    cls: "h-[42px]",
    icon: (
      <Svg w={22} box="0 0 22 22">
        <path d="M3 1h4v14l3 4H1l2-4z" fill="#7aa4dc" stroke="#3c6cac" />
        <path d="M10 8h11l-4 3M11 5h10M1 20h12" stroke="#5a8cc8" strokeWidth="1.500" />
        <path d="M8 5l3 4" stroke="#f4f4f4" strokeWidth="4" />
        <path d="M11 9l7 11M8 14l4-3" stroke="#1a2434" strokeWidth="2.500" />
      </Svg>
    ),
  },
  {
    cls: "h-[42px]",
    icon: (
      <Svg w={22} box="0 0 22 23">
        <path d="M8 4c3-4 7-3 12-1l-4 5-4-3-2 4 4 5" stroke="#333" strokeWidth="1.500" />
        <path d="M4 12l8 0 2 5-5 5-7-2z" fill="#d4d8e8" stroke="#555" />
        <path d="M1 17h6v5H1z" fill="#e8a04c" />
        <path d="M8 13l3 4M12 19h6v3" stroke="#5a3a84" strokeWidth="2" />
      </Svg>
    ),
  },
];

function ResourceBar() {
  return (
    <aside className="flex w-[32px] shrink-0 flex-col border-r border-[#a2a2a2] bg-[#dadada]">
      {rail.map((r, i) => (
        <div key={i} className={`flex shrink-0 items-center justify-center pl-[5px] ${r.cls}`}>
          {r.icon}
        </div>
      ))}
    </aside>
  );
}

/* ---------- web browser panel ---------- */

function BrowserPanel() {
  return (
    <div className="flex w-[430px] shrink-0 flex-col border-r border-[#999] bg-white text-[16.500px]">
      <div className="flex h-[38px] shrink-0 items-center justify-between pl-[10px] pr-[17px] tracking-[0.1px]">
        Web Browser
        <div className="h-[15px] w-[16px] border border-t-[3px] border-black" />
      </div>
      <div className="flex h-[40px] shrink-0 items-center pl-[12px]">
        <Svg w={36} h={32} box="0 0 36 32">
          <path d="M6 14L13 5l7 11v15L6 27z" fill="#f4f2ec" stroke="#9a9484" strokeWidth=".7" />
          <path d="M20 17l12-3v12l-12 5z" fill="#dcd8cc" stroke="#9a9484" strokeWidth=".7" />
          <path d="M1 16L13 3l8 15-2 1-7-12-9 11z" fill="#d8641c" />
          <path d="M13 3l12-2 10 14-14 4z" fill="#f4a824" stroke="#c47c14" strokeWidth=".7" />
          <path d="M6 1h6v4l-6 6z" fill="#8c2c1c" />
          <path d="M9 19l5 1v10l-5-1z" fill="#2444a4" />
          <path d="M24 21l4-1v4l-4 1z" fill="#9cb4d4" />
        </Svg>
        <span className="ml-[17px]">
          <Svg w={26} h={24} box="0 0 26 24">
            <path d="M1 12L13 1v6h12v10H13v6z" fill="#8cd8ec" stroke="#2c5a7c" strokeWidth="1.500" />
          </Svg>
        </span>
        <span className="ml-[23px]">
          <Svg w={26} h={24} box="0 0 26 24">
            <path d="M25 12L13 1v6H1v10h12v6z" fill="#d0d0d0" stroke="#8c8c8c" strokeWidth="1.500" />
          </Svg>
        </span>
        <span className="ml-[15px]">
          <Svg w={32} h={30} box="0 0 32 30">
            <path d="M22 4A13 13 0 1 0 25 24" stroke="#2c3c90" strokeWidth="2.200" />
            <path d="M21 20l9-8 1 11z" fill="#1c2c80" />
          </Svg>
        </span>
        <div className="ml-[9px] flex h-[28px] w-[156px] items-center justify-end overflow-hidden whitespace-nowrap border border-[#999] pr-[6px] text-[16px] tracking-[-0.3px]">
          um/ct-p/NXforDesign
        </div>
        <span className="ml-[11px] mr-[5px] pt-[1px] text-[16px] tracking-[-0.3px]">Tools</span>
        <span className="pt-[9px]">
          <Arrow />
        </span>
      </div>
      <div className="ml-[6px] mr-[9px] mt-[4px] flex-1 overflow-hidden whitespace-nowrap font-['Liberation_Serif',serif] text-[23.500px] leading-[28px] tracking-[0.15px] text-black">
        AccessDeniedAccess
        <br />
        Denied5C34NSH4X87E5B7BJVhri8Udfutt
      </div>
      <div className="mb-[7px] ml-[6px] mr-[9px] flex h-[24px] shrink-0 items-center bg-[#f0f0f0]">
        <span className="flex w-[26px] justify-center">
          <Svg w={9} h={12} box="0 0 9 12">
            <path d="M8 1L2 6l6 5" stroke="#444" strokeWidth="2.200" />
          </Svg>
        </span>
        <div className="h-full w-[114px] bg-[#cbcbcb]" />
        <span className="ml-auto flex w-[26px] justify-center">
          <Svg w={9} h={12} box="0 0 9 12">
            <path d="M1 1l6 5-6 5" stroke="#444" strokeWidth="2.200" />
          </Svg>
        </span>
      </div>
    </div>
  );
}

/* ---------- graphics window ---------- */

const PartIcon = () => (
  <Svg w={16}>
    <path d="M2 4l5-3 4 2v5l5 1v5l-7 3-7-4z" fill="#2f5fc4" stroke="#1a3a84" />
    <path d="M2 4l5-3 4 2-5 3zM7 10l4-2 5 1-6 3z" fill="#7fa8ec" />
  </Svg>
);

function PartTabs() {
  return (
    <div className="flex h-[31px] shrink-0 items-center border-b-2 border-[#5f98a8] bg-white text-[17px] tracking-[0px]">
      <div className="flex w-[126px] items-center gap-[4px] pl-[6px] tracking-[0.2px]">
        <Svg w={16}>
          <path d="M2 8l5-6 4 5M9 2l-3 7" stroke="#5a4a9c" strokeWidth="1.300" />
          <path d="M4 9l9 0 4 5H7z" fill="#dcdcd0" stroke="#666" />
        </Svg>
        dwg1.prt
      </div>
      <div className="flex w-[79px] items-center gap-[4px]">
        <PartIcon />
        1.prt
      </div>
      <div className="flex h-full w-[85px] items-center gap-[4px] bg-[#559fb6] pl-[6px] text-white">
        <PartIcon />
        <span className="w-[40px]">2.prt</span>
        <Svg w={9} box="0 0 8 8">
          <path d="M1 1l6 6M7 1L1 7" stroke="#fff" strokeWidth="2" />
        </Svg>
      </div>
    </div>
  );
}

const face = "#788588";
const light = "#b9ced3";

// the wide letters are condensed so every glyph keeps the same pitch
const markRuns: { t: string; x: number; s: number }[] = [
  { t: "www", x: 833, s: 0.71 },
  { t: ".", x: 943, s: 1 },
  { t: "3", x: 979, s: 0.88 },
  { t: "d", x: 1015, s: 0.92 },
  { t: "m", x: 1049, s: 0.65 },
  { t: "o", x: 1086, s: 0.95 },
  { t: "x", x: 1121, s: 0.93 },
  { t: ".", x: 1159, s: 1 },
  { t: "c", x: 1194, s: 1 },
  { t: "o", x: 1229, s: 0.95 },
  { t: "m", x: 1264, s: 0.67 },
];

function Model() {
  return (
    <svg viewBox="462 259 1458 734" width="1458" height="734" className="block" strokeLinejoin="round">
      <defs>
        <linearGradient id="fillet" x1="1373" y1="447" x2="1440" y2="692" gradientUnits="userSpaceOnUse">
          <stop offset="0" stopColor="#bbd2d7" />
          <stop offset=".35" stopColor="#bcd5d9" />
          <stop offset=".65" stopColor="#9fb1b6" />
          <stop offset="1" stopColor="#7b888c" />
        </linearGradient>
      </defs>
      <g stroke="#263033" strokeWidth="1.100">
        <path d="M672 415L727 441 676 658 621 633z" fill={face} />
        <path d="M672 415L922 398 933 403 928 427 727 441z" fill={light} />
        <path d="M727 441L928 427 876 644 676 658z" fill={face} stroke="none" />
        <path d="M676 658L727 441 928 427" fill="none" />
        <path d="M963 283L1013 279 1373 447 1323 450z" fill={light} />
        <path
          d="M1323 450L1373 447C1435 478 1475 565 1475 637Q1475 663 1468 692L1418 695Q1425 668 1425 636C1425 560 1385 480 1323 450z"
          fill="url(#fillet)"
        />
        <path d="M1418 695L1468 692 1423 873 1374 876z" fill={face} />
        <path d="M963 283L1323 450C1385 480 1425 560 1425 636Q1425 668 1418 695L1374 876 876 644z" fill={face} />
        <path d="M676 658L876 644 1374 876 1299 881 1035 825z" fill={light} />
        <path d="M621 633L676 658 1035 825 1018 898 603 705z" fill={face} />
        <path d="M1035 825L1299 881 1282 953 1018 898z" fill="#839195" />
        <path d="M1299 881L1423 873 1407 945 1282 953z" fill={face} />
      </g>
      <g stroke="#455fd0" strokeWidth="2" fill="none">
        <path d="M621 633L676 658 876 644 1374 876 1423 873" />
        <path d="M603 705L1018 898 1282 953 1407 945" />
      </g>

      {/* datum csys at the part origin */}
      <g fill="none" stroke="#d6dadb" strokeWidth="1.100">
        <path d="M612 665L639 663 631 703 603 705M631 703L660 716 636 719 603 705M631 703L650 701" />
        <path d="M648 698l8 2-8 3z" fill="#d6dadb" />
      </g>
      <text x="656" y="705" fontSize="13" fill="#c3cccd">Y</text>
      <text x="617" y="624" fontSize="12" fill="#a06a6a">Z</text>
      <text x="662" y="739" fontSize="13" fill="#a06a8a">X</text>
      <path d="M594 704h14M601 697v14" stroke="#c0304a" strokeWidth="1.600" />
      <path d="M618 630l4 11h-7zM648 725l10 5-5 2z" fill="#b43a3a" />

      {/* view triad */}
      <g stroke="#b3b8b8" fill="#d6d9d9" fillOpacity=".7">
        <path d="M530 909L545 905 561 914 557 938 541 932 526 934z" />
        <path d="M530 909L545 916 561 914M545 916L541 932" fill="none" />
      </g>
      <text x="547" y="933" fontSize="13" fill="#a8bcae">Y</text>
      <path d="M523 929L531 897" stroke="#1737a0" strokeWidth="3" />
      <path d="M532 891l-5 11h8z" fill="#1737a0" />
      <path d="M523 930L545 940" stroke="#c03030" strokeWidth="3" />
      <path d="M552 943l-11-1 4-6z" fill="#c03030" />
      <circle cx="522" cy="930" r="4" fill="#e4e4e4" stroke="#999" />
      <text x="528" y="892" fontSize="14" fill="#2040a8">Z</text>
      <text x="551" y="950" fontSize="13" fill="#c04040">X</text>

      <g fill="#dbe5e3" opacity=".92">
        <text x="617" y="563" fontSize="71" fontWeight="300" className="font-['Noto_Sans_CJK_SC',sans-serif]">
          莫西网
        </text>
        {markRuns.map((r) => (
          <text
            key={r.x}
            transform={`translate(${r.x} 562) scale(${r.s} 1)`}
            fontSize="70"
            className="font-['Liberation_Serif','Noto_Sans_CJK_SC',serif]"
          >
            {r.t}
          </text>
        ))}
      </g>
    </svg>
  );
}

function GraphicsWindow() {
  return (
    <main className="flex min-w-0 flex-1 flex-col">
      <PartTabs />
      <div className="flex-1 overflow-hidden bg-[linear-gradient(#b4b4b4,#cac9ca_28%,#dcdcdc_58%,#e5e5e5_78%,#e8e8e8)]">
        <Model />
      </div>
    </main>
  );
}

/* ---------- taskbar ---------- */

const apps: { cls: string; open?: boolean; active?: boolean; icon: React.ReactNode }[] = [
  {
    cls: "w-[72px]",
    icon: (
      <Svg w={26} box="0 0 26 26">
        <circle cx="13" cy="13" r="9.500" stroke="#fff" strokeWidth="3" />
      </Svg>
    ),
  },
  {
    cls: "w-[72px]",
    icon: (
      <Svg w={26} box="0 0 26 26">
        <path d="M1 1v4h15V1M1 8h15v11H1zM1 26v-4h15v4M23 1v7M23 13v12" stroke="#fff" strokeWidth="1.500" />
        <path d="M21 8h4v4h-4z" fill="#fff" />
      </Svg>
    ),
  },
  {
    cls: "w-[80px]",
    icon: (
      <Svg w={36} box="0 0 36 36">
        <defs>
          <linearGradient id="edgeTop" x1="0" x2="1">
            <stop offset="0" stopColor="#1c9ce0" />
            <stop offset=".5" stopColor="#34c4d0" />
            <stop offset="1" stopColor="#68d858" />
          </linearGradient>
        </defs>
        <circle cx="18" cy="18" r="17.500" fill="#1670c8" />
        <path d="M1 15C3 6 9 .5 18 .5c10 0 17.500 7 17.500 15 0 6-5 9-9 9-3 0-5-1-4-3 3-6-2-10-8-10C8 11.500 3 13 1 15z" fill="url(#edgeTop)" />
        <path d="M14 15c-4 8 1 18 12 18 3 0 5-2 6-4-9 4-17-3-13-12-1-2-3-3-5-2z" fill="#0c4a94" />
        <path d="M18 17c-1 7 5 10 13 8l4-1-3 5c-8 4-16-4-14-12z" fill="#1e1e1e" />
      </Svg>
    ),
  },
  {
    cls: "w-[73px]",
    open: true,
    icon: (
      <Svg w={34} h={32} box="0 0 34 32">
        <path d="M1 1h14l3 3h15v8H1z" fill="#d09a30" />
        <path d="M1 6h32v23H1z" fill="#f6cf6c" />
        <path d="M6 18h22v13h-6v-7H12v7H6z" fill="#3c8cc0" />
      </Svg>
    ),
  },
  {
    cls: "w-[75px]",
    icon: (
      <Svg w={36} box="0 0 36 36">
        <path d="M12 10V6c0-7 12-7 12 0v4M15 10V6c0-4 7-4 7 0" stroke="#fff" strokeWidth="1.500" />
        <path d="M1 10h34v25H1z" fill="#fff" />
        <path d="M10.500 14.500h7v7h-7z" fill="#e8502c" />
        <path d="M18.500 14.500h7v7h-7z" fill="#7cb42c" />
        <path d="M10.500 22.500h7v7h-7z" fill="#2c9cdc" />
        <path d="M18.500 22.500h7v7h-7z" fill="#f4b42c" />
      </Svg>
    ),
  },
  {
    cls: "w-[75px]",
    icon: (
      <Svg w={37} h={32} box="0 0 38 32">
        <path d="M1 10L19 1l18 9v20H1z" fill="#fff" />
        <path d="M2 11h34L24 18l6 8-13-8z" fill="#1e1e1e" />
      </Svg>
    ),
  },
  {
    cls: "w-[77px] pr-[4px]",
    icon: (
      <Svg w={32} h={28} box="0 0 32 28">
        <path d="M1 3l4-2h26v8H4z" fill="#a03c84" />
        <path d="M1 10l3-1h27v9H4z" fill="#2c34a0" />
        <path d="M1 19l3-1h27v8H4z" fill="#2c8c2c" />
        <path d="M1 4l5 1v4l-5-1zM1 12l5 1v4l-5-1zM1 20l5 1v4l-5-1z" fill="#e8e0d0" />
        <path d="M6 4h25" stroke="#d48cc0" />
        <path d="M6 9h25M6 18h25" stroke="#1c1c2c" strokeWidth="1.500" />
        <path d="M17 1h4v25h-4z" fill="#6c4c24" />
        <path d="M16 11h6v6h-6z" fill="#c8a858" stroke="#4c3414" />
      </Svg>
    ),
  },
  {
    cls: "w-[73px]",
    open: true,
    active: true,
    icon: (
      <Svg w={38} box="0 0 38 38">
        <ellipse cx="18" cy="21" rx="14" ry="15" fill="#2490d8" />
        <path d="M5 16c3-8 20-12 26-1l-6 8-12 9c-6-3-9-10-8-16z" fill="#74d0f0" />
        <path d="M7 2l13 2-4 17z" fill="#c02438" />
        <path d="M7 2l13 2-8 4z" fill="#f4a4ac" />
        <path d="M29 11c9 2 7 10-3 16-8 5-16 6-21 5M27 14c5 1 4 6-4 11" stroke="#e8c070" strokeWidth="2.600" />
        <path d="M1 34l7-6 1 8z" fill="#f4d48c" />
      </Svg>
    ),
  },
  {
    cls: "w-[75px]",
    open: true,
    icon: (
      <Svg w={34} box="0 0 34 34">
        <path d="M17 17L2.300 8.500A17 17 0 0 1 31.700 8.500z" fill="#dc3c30" />
        <path d="M17 17L31.700 8.500A17 17 0 0 1 17 34z" fill="#f8c828" />
        <path d="M17 17L17 34A17 17 0 0 1 2.300 8.500z" fill="#2c9c4c" />
        <path d="M17 9h14.700L24 21z" fill="#f8c828" />
        <path d="M17 9h14.700l.2-.3L17 5z" fill="#dc3c30" />
        <path d="M10 21l7 4 7-4-7 13z" fill="#2c9c4c" />
        <path d="M24 21l-7 13 7-2 4-10z" fill="#f8c828" />
        <circle cx="17" cy="17" r="8" fill="#fff" />
        <circle cx="17" cy="17" r="6.300" fill="#3c78dc" />
      </Svg>
    ),
  },
];

function Tray() {
  return (
    <div className="ml-auto flex items-center text-white">
      <span className="mb-[30px] w-[70px] text-[16px] tracking-[-0.2px]">EN</span>
      <Svg w={36} h={32} box="0 0 36 32">
        <circle cx="17" cy="13" r="12.500" fill="#f4a824" />
        <path d="M9 31c-10 0-11-11-3-12 1-9 15-11 18-2 7-1 11 3 11 8 0 4-3 6-7 6z" fill="#dce4f0" />
        <path d="M4 28c3 3 25 3 30 0-1 2-3 3-6 3H9c-2 0-4-1-5-3z" fill="#b4c4e0" />
      </Svg>
      <span className="ml-[11px] w-[70px] pt-[3px] text-[19.500px] tracking-[-0.4px]">26°C</span>
      <Svg w={20} h={12} box="0 0 20 12">
        <path d="M1 11l9-9 9 9" stroke="#eee" strokeWidth="1.500" />
      </Svg>
      <span className="ml-[18px]">
        <Svg w={18} h={24} box="0 0 18 24">
          <path d="M2 6h9v12H2zM11 11l5-3v8l-5-3M3 3c3-2 7-2 10 0M3 21c3 2 7 2 10 0" stroke="#eee" strokeWidth="1.300" />
        </Svg>
      </span>
      <span className="ml-[13px]">
        <Svg w={26} h={20} box="0 0 26 20">
          <path d="M7 5h17v11H7zM24 8h2v5h-2" fill="#fff" stroke="#fff" />
          <path d="M1 1v5c0 4 6 4 6 0V1M4 9v7h4M1 3h6" stroke="#fff" strokeWidth="1.400" />
        </Svg>
      </span>
      <span className="ml-[14px]">
        <Svg w={21} h={22} box="0 0 21 22">
          <path d="M2 21C2 10 9 3 19 3M6 21c0-8 5-14 13-14M10 21c0-5 3-9 9-10M14 21c0-3 2-5 5-6" stroke="#ddd" strokeWidth="1.300" />
          <circle cx="17.500" cy="19.500" r="1.800" fill="#fff" />
        </Svg>
      </span>
      <span className="ml-[13px]">
        <Svg w={24} h={22} box="0 0 24 22">
          <path d="M1 8h4l6-6v18l-6-6H1zM14 8c2 2 2 4 0 6M17 5c3 3 3 9 0 12M20 3c4 4 4 12 0 16" stroke="#eee" strokeWidth="1.300" />
        </Svg>
      </span>
      <div className="ml-[14px] w-[98px] whitespace-nowrap text-center text-[17.500px] leading-[28px] tracking-[-0.2px]">
        <div>14:37</div>
        <div>18-09-2022</div>
      </div>
      <span className="ml-[25px]">
        <Svg w={26} h={26} box="0 0 26 26">
          <path d="M1 2h24v18h-9l-4 5v-5H1z" stroke="#eee" strokeWidth="1.500" />
        </Svg>
      </span>
      <div className="ml-[29px] mr-[6px] h-[58px] w-px bg-[#777]" />
    </div>
  );
}

function Taskbar() {
  return (
    <footer className="flex h-[60px] shrink-0 items-stretch border-t border-[#8f8f8f] bg-[#1e1e1e]">
      <div className="flex w-[72px] items-center justify-center">
        <Svg w={24} box="0 0 24 24">
          <path d="M0 3.500L10.500 2v9.500H0zM11.500 1.900L24 0v11.500H11.500zM0 12.500h10.500V22L0 20.500zM11.500 12.500H24V24l-12.500-1.900z" fill="#fff" />
        </Svg>
      </div>
      <div className="flex w-[516px] items-center border-x border-b-2 border-[#bbb] bg-[#f1f1f1] pl-[17px] text-[21.500px] tracking-[0.05px] text-[#333]">
        <Svg w={25} box="0 0 25 25">
          <circle cx="15.500" cy="8.500" r="7.500" stroke="#111" strokeWidth="1.600" />
          <path d="M10 14L1 24" stroke="#111" strokeWidth="1.600" />
        </Svg>
        <span className="ml-[16px] pt-[3px]">Type here to search</span>
      </div>
      {apps.map((a, i) => (
        <div key={i} className={`flex flex-col items-center ${a.cls} ${a.active ? "bg-[#4a4b4c]" : ""}`}>
          <div className="flex flex-1 items-center">{a.icon}</div>
          <div className={`h-[3px] ${a.active ? "w-full" : "w-[61px]"} ${a.open ? "bg-[#80afdc]" : ""}`} />
        </div>
      ))}
      <Tray />
    </footer>
  );
}

export default function App() {
  return (
    <div className="flex h-[1080px] w-[1920px] flex-col overflow-hidden whitespace-nowrap bg-white font-['Open_Sans','Noto_Sans',sans-serif] text-[#222]">
      <TitleBar />
      <RibbonTabs />
      <Ribbon />
      <SelectionBar />
      <div className="flex min-h-0 flex-1">
        <ResourceBar />
        <BrowserPanel />
        <GraphicsWindow />
      </div>
      <div className="flex h-[27px] shrink-0 items-center justify-end gap-[4px] border-t border-[#a2a2a2] bg-white pr-[55px]">
        <Svg w={16}>
          <path d="M1 1h16v16H1z" fill="#dedede" stroke="#b4b4b4" />
          <path d="M3 5l4 3 2-4 5 3M4 12l3-3 3 4 4-4" stroke="#999" strokeWidth="1.300" />
        </Svg>
        <FullScreenIcon w={16} />
      </div>
      <Taskbar />
    </div>
  );
}
